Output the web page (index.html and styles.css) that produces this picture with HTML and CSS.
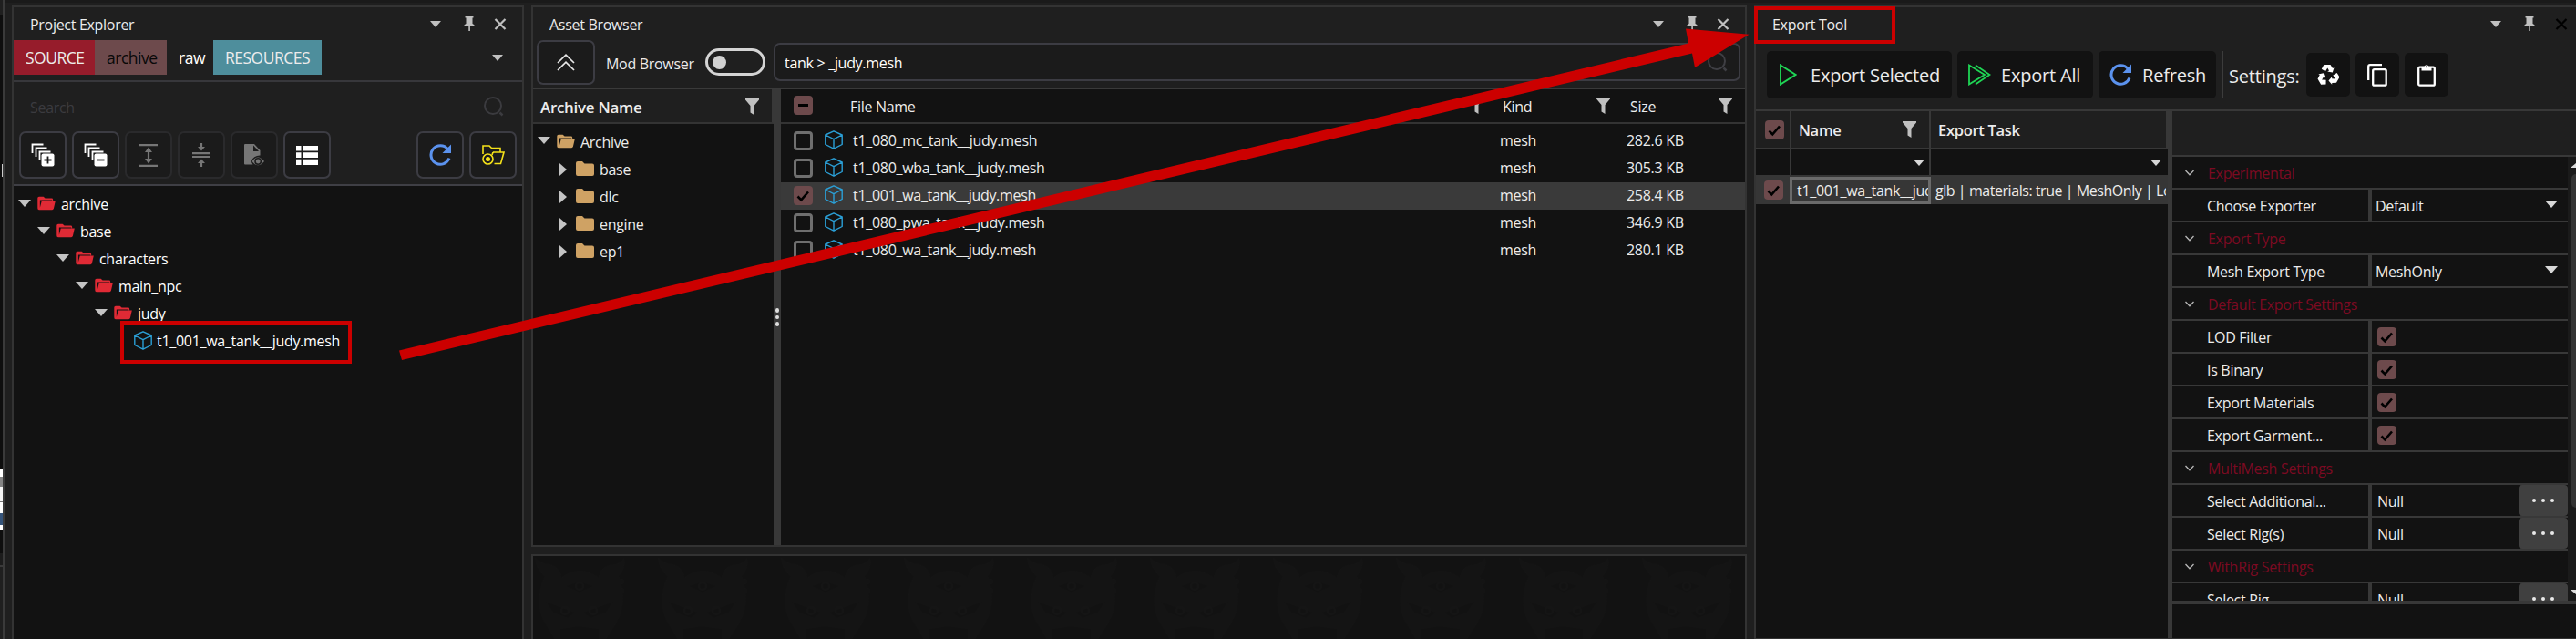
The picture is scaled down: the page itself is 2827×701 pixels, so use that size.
FILE: index.html
```
<!DOCTYPE html>
<html lang="en">
<head>
<meta charset="utf-8">
<title>Export Tool</title>
<link rel="stylesheet" href="styles.css">
</head>
<body>
<svg class="defs" width="0" height="0" aria-hidden="true">
  <symbol id="caret" viewBox="0 0 14 8"><path d="M0 0H14L7 8Z" fill="currentColor"/></symbol>
  <symbol id="caret-right" viewBox="0 0 8 14"><path d="M0 0V14L8 7Z" fill="currentColor"/></symbol>
  <symbol id="pin" viewBox="0 0 12 16"><path d="M1.5 0H10.500V1.500H9.500V8L11.500 9.200V10.800H6.900V16H5.300V10.800H.5V9.200L2.500 8V1.500H1.500Z" fill="currentColor"/></symbol>
  <symbol id="close" viewBox="0 0 14 13"><path d="M1.500 1L12.500 12M12.500 1L1.500 12" stroke="currentColor" stroke-width="2.200" fill="none"/></symbol>
  <symbol id="search" viewBox="0 0 22 22"><circle cx="10" cy="10" r="9" fill="none" stroke="currentColor" stroke-width="2"/><path d="M17.500 17.500L20.500 20.500" stroke="currentColor" stroke-width="2.500"/></symbol>
  <symbol id="funnel" viewBox="0 0 15 18"><path d="M0 0H15V1.500L9.500 8V18L5.500 15.500V8L0 1.500Z" fill="currentColor"/></symbol>
  <symbol id="folder-open" viewBox="0 0 21 16"><path d="M2 15.500Q.3 15.500.3 13.500V2Q.3.300 2 .300H7L9 2.300H16.500Q18 2.300 18 3.800V5H17V4.200H3V13L5 5.500H20.800L18.800 14Q18.400 15.500 17 15.500Z" fill="currentColor"/></symbol>
  <symbol id="folder" viewBox="0 0 20 16"><path d="M0 2Q0 0 2 0H7L9.500 2.500H18Q20 2.500 20 4.500V14Q20 16 18 16H2Q0 16 0 14Z" fill="currentColor"/></symbol>
  <symbol id="cube" viewBox="0 0 20 21"><path d="M10 .8L19.200 5V15.500L10 20.200L.8 15.500V5ZM.8 5L10 9.700L19.200 5M10 9.700V20.200" fill="none" stroke="currentColor" stroke-width="1.400" stroke-linejoin="round"/></symbol>
  <symbol id="check" viewBox="0 0 21 21"><path d="M4.500 11.500L8.300 15.300L16 6.500" fill="none" stroke="#000" stroke-width="2.600"/></symbol>
  <symbol id="chev" viewBox="0 0 10 7"><path d="M.5 1L5 5.800L9.500 1" fill="none" stroke="currentColor" stroke-width="1.300"/></symbol>
  <symbol id="refresh" viewBox="0 0 24 24"><path d="M20.300 5.500A10.300 10.300 0 1 0 22 15.500" fill="none" stroke="currentColor" stroke-width="3"/><path d="M24 .5V10H14.500Z" fill="currentColor"/></symbol>
</svg>

<div class="app">
  <aside class="strip"><i class="strip-top"></i><i class="strip-text"></i><i class="strip-white"></i><i class="strip-end"></i></aside>

  <section class="panel explorer">
    <header class="title"><span>Project Explorer</span>
      <div class="winbtns"><svg class="w-caret"><use href="#caret"/></svg><svg class="w-pin"><use href="#pin"/></svg><svg class="w-close"><use href="#close"/></svg></div>
    </header>
    <nav class="tabs">
      <span class="tab source">SOURCE</span><span class="tab arch">archive</span><span class="tab raw">raw</span><span class="tab res">RESOURCES</span>
      <svg class="tabs-caret"><use href="#caret"/></svg>
    </nav>
    <div class="search"><span>Search</span><svg><use href="#search"/></svg></div>
    <div class="tools">
      <button class="tool"><svg width="26" height="26" viewBox="0 0 26 26"><g fill="none" stroke="#fff" stroke-width="1.800"><path d="M1.500 11V1.500H13.500M5.500 15V5.500H17.500M9.500 19V9.500H21.500" /></g><rect x="11.500" y="11.500" width="14" height="14" rx="2" fill="#fff"/><path d="M18.500 14.500V22.500M14.500 18.500H22.500" stroke="#1b1b1b" stroke-width="1.800"/></svg></button>
      <button class="tool"><svg width="26" height="26" viewBox="0 0 26 26"><g fill="none" stroke="#fff" stroke-width="1.800"><path d="M1.500 11V1.500H13.500M5.500 15V5.500H17.500M9.500 19V9.500H21.500" /></g><rect x="11.500" y="11.500" width="14" height="14" rx="2" fill="#fff"/><path d="M14.500 18.500H22.500" stroke="#1b1b1b" stroke-width="1.800"/></svg></button>
      <button class="tool off"><svg width="20" height="25" viewBox="0 0 20 25"><path d="M0 1.200H20M0 23.800H20M10 6V19" stroke="#767676" stroke-width="2.200"/><path d="M10 3.500L14 9H6ZM10 21.500L14 16H6Z" fill="#767676"/></svg></button>
      <button class="tool off"><svg width="20" height="26" viewBox="0 0 20 26"><path d="M0 11.200H20M0 15H20M10 0V5M10 26V21" stroke="#767676" stroke-width="2.200"/><path d="M10 8.500L14 4H6ZM10 17.500L14 22H6Z" fill="#767676"/></svg></button>
      <button class="tool off"><svg width="24" height="26" viewBox="0 0 24 26"><path d="M2 1H12L18.500 8V13.500A10 9 0 0 0 8.500 20L10.500 23.500H2Q1 23.500 1 22.500V2Q1 1 2 1ZM11 2.500V9H17Z" fill="#767676" fill-rule="evenodd"/><path d="M9.500 20Q16 11 23 20Q16 28.500 9.500 20Z" fill="#767676"/><circle cx="16.200" cy="20" r="3.200" fill="#767676" stroke="#1c1c1c" stroke-width="1.500"/></svg></button>
      <button class="tool"><svg width="24" height="21" viewBox="0 0 24 21"><path d="M0 0H5.500V5.500H0ZM7 0H24V5.500H7ZM0 7.300H5.500V13H0ZM7 7.300H24V13H7ZM0 14.800H5.500V21H0ZM7 14.800H24V21H7Z" fill="#fff"/></svg></button>
      <span class="grow"></span>
      <button class="tool blue"><svg width="24" height="24"><use href="#refresh"/></svg></button>
      <button class="tool"><svg width="25" height="23" viewBox="0 0 25 23"><g fill="none" stroke="#f5e21a" stroke-width="1.600"><path d="M1 10V1H8L10.500 3.500H20V8M12 8H24L20.500 20.500H13.500M12 8L11 11"/><circle cx="6.500" cy="15.500" r="5.500"/></g><circle cx="6.500" cy="15.500" r="2.500" fill="#f5e21a"/></svg></button>
    </div>
    <div class="tree">
      <div class="node d0"><svg class="dn"><use href="#caret"/></svg><svg class="fo"><use href="#folder-open"/></svg><span>archive</span></div>
      <div class="node d1"><svg class="dn"><use href="#caret"/></svg><svg class="fo"><use href="#folder-open"/></svg><span>base</span></div>
      <div class="node d2"><svg class="dn"><use href="#caret"/></svg><svg class="fo"><use href="#folder-open"/></svg><span>characters</span></div>
      <div class="node d3"><svg class="dn"><use href="#caret"/></svg><svg class="fo"><use href="#folder-open"/></svg><span>main_npc</span></div>
      <div class="node d4"><svg class="dn"><use href="#caret"/></svg><svg class="fo"><use href="#folder-open"/></svg><span>judy</span></div>
      <div class="node leaf"><svg class="cube"><use href="#cube"/></svg><span>t1_001_wa_tank__judy.mesh</span></div>
    </div>
  </section>

  <div class="middle">
    <section class="panel browser">
      <header class="title"><span>Asset Browser</span>
        <div class="winbtns"><svg class="w-caret"><use href="#caret"/></svg><svg class="w-pin"><use href="#pin"/></svg><svg class="w-close"><use href="#close"/></svg></div>
      </header>
      <div class="bar">
        <button class="up"><svg width="20" height="19" viewBox="0 0 20 19"><path d="M1 10L10 1.200L19 10M1 18L10 9.200L19 18" fill="none" stroke="#e8e8e8" stroke-width="1.700"/></svg></button>
        <span class="mod">Mod Browser</span>
        <span class="toggle"><i></i></span>
        <div class="query"><span>tank &gt; _judy.mesh</span><svg><use href="#search"/></svg></div>
      </div>
      <div class="split">
        <div class="left">
          <div class="lhead"><span>Archive Name</span><svg class="fn"><use href="#funnel"/></svg></div>
          <div class="atree">
            <div class="anode top"><svg class="dn"><use href="#caret"/></svg><svg class="fo"><use href="#folder-open"/></svg><span>Archive</span></div>
            <div class="anode"><svg class="rt"><use href="#caret-right"/></svg><svg class="fo"><use href="#folder"/></svg><span>base</span></div>
            <div class="anode"><svg class="rt"><use href="#caret-right"/></svg><svg class="fo"><use href="#folder"/></svg><span>dlc</span></div>
            <div class="anode"><svg class="rt"><use href="#caret-right"/></svg><svg class="fo"><use href="#folder"/></svg><span>engine</span></div>
            <div class="anode"><svg class="rt"><use href="#caret-right"/></svg><svg class="fo"><use href="#folder"/></svg><span>ep1</span></div>
          </div>
        </div>
        <div class="gutter"><i></i><i></i><i></i></div>
        <div class="files">
          <div class="frow fhead"><span class="cb on dash"></span><span class="c-name">File Name</span><svg class="fn"><use href="#funnel"/></svg><span class="c-kind">Kind</span><svg class="fn"><use href="#funnel"/></svg><span class="c-size">Size</span><svg class="fn last"><use href="#funnel"/></svg></div>
          <div class="frow"><span class="cb"></span><svg class="cube"><use href="#cube"/></svg><span class="f-name">t1_080_mc_tank__judy.mesh</span><span class="f-kind">mesh</span><span class="f-size">282.6 KB</span></div>
          <div class="frow"><span class="cb"></span><svg class="cube"><use href="#cube"/></svg><span class="f-name">t1_080_wba_tank__judy.mesh</span><span class="f-kind">mesh</span><span class="f-size">305.3 KB</span></div>
          <div class="frow sel"><span class="cb on"><svg><use href="#check"/></svg></span><svg class="cube"><use href="#cube"/></svg><span class="f-name">t1_001_wa_tank__judy.mesh</span><span class="f-kind">mesh</span><span class="f-size">258.4 KB</span></div>
          <div class="frow"><span class="cb"></span><svg class="cube"><use href="#cube"/></svg><span class="f-name">t1_080_pwa_tank__judy.mesh</span><span class="f-kind">mesh</span><span class="f-size">346.9 KB</span></div>
          <div class="frow"><span class="cb"></span><svg class="cube"><use href="#cube"/></svg><span class="f-name">t1_080_wa_tank__judy.mesh</span><span class="f-kind">mesh</span><span class="f-size">280.1 KB</span></div>
        </div>
      </div>
    </section>
    <section class="panel lower">
      <svg width="1330" height="91">
        <defs><pattern id="mask" width="135" height="130" patternUnits="userSpaceOnUse">
          <g fill="#141414"><path d="M2 2Q10 9 18 9Q30 12 31 24Q51 8 72 24Q74 12 84 10Q97 9 100 2Q102 14 94 22Q104 50 92 72L80 91H24L10 68Q2 45 13 22Q4 16 2 2Z"/><circle cx="97" cy="28" r="3"/><circle cx="97" cy="38" r="3"/></g>
          <g fill="#121212"><path d="M36 33L51 28L66 33L51 40ZM14 50L46 62L38 68L22 62ZM88 50L55 62L63 68L80 62Z"/><path d="M30 80L50 77L72 80V91H30Z"/></g>
          <g fill="none" stroke="#151515" stroke-width="2"><circle cx="51" cy="33" r="4"/><circle cx="35" cy="60" r="4"/><circle cx="66" cy="60" r="4"/></g>
        </pattern></defs>
        <rect width="1330" height="91" fill="url(#mask)"/>
      </svg>
    </section>
  </div>

  <section class="panel export">
    <header class="title"><span>Export Tool</span>
      <div class="winbtns"><svg class="w-caret"><use href="#caret"/></svg><svg class="w-pin"><use href="#pin"/></svg><svg class="w-close black"><use href="#close"/></svg></div>
    </header>
    <div class="actions">
      <button class="act a1"><svg width="19" height="24" viewBox="0 0 19 24"><path d="M1 1.500L17.500 12L1 22.500Z" fill="none" stroke="#1fd655" stroke-width="1.900"/></svg><span>Export Selected</span></button>
      <button class="act a2"><svg width="25" height="24" viewBox="0 0 25 24"><path d="M1 1.500L18 12L1 22.500ZM8 1.500L23.500 12L8 22.500" fill="none" stroke="#1fd655" stroke-width="1.800"/></svg><span>Export All</span></button>
      <button class="act a3"><svg width="24" height="24"><use href="#refresh"/></svg><span>Refresh</span></button>
      <i class="sep"></i><span class="set">Settings:</span>
      <button class="sq"><svg width="24" height="24" viewBox="0 0 24 24"><g fill="#fff"><path id="ra" d="M7.300 1H14.500L17 5L18.500 4.200L16.800 9.500L11.200 8.500L13 7.400L11.300 4.400L9 8.300L4.800 5.800Z"/><use href="#ra" transform="rotate(120 12 12.800)"/><use href="#ra" transform="rotate(240 12 12.800)"/></g></svg></button>
      <button class="sq"><svg width="22" height="25" viewBox="0 0 22 25"><path d="M1.200 18V3Q1.200 1.200 3 1.200H16" fill="none" stroke="#fff" stroke-width="2.300"/><rect x="6.200" y="6.200" width="14.500" height="17.500" rx="1.500" fill="none" stroke="#fff" stroke-width="2.300"/></svg></button>
      <button class="sq"><svg width="20" height="25" viewBox="0 0 20 25"><rect x="1.200" y="3.700" width="17.600" height="20" rx="1.500" fill="none" stroke="#fff" stroke-width="2.300"/><path d="M4.500 3H7.500A2.700 2.700 0 0 1 12.500 3H15.500V7.500H4.500Z" fill="#fff"/><circle cx="10" cy="3.300" r="1" fill="#111"/></svg></button>
    </div>
    <div class="xbody">
      <div class="grid">
        <div class="ghead"><div class="g0"><span class="cb on"><svg><use href="#check"/></svg></span></div><div class="g1"><span>Name</span><svg class="fn"><use href="#funnel"/></svg></div><div class="g2"><span>Export Task</span></div></div>
        <div class="gfilter"><div class="g0"></div><div class="g1"><svg class="dn"><use href="#caret"/></svg></div><div class="g2"><svg class="dn"><use href="#caret"/></svg></div></div>
        <div class="grow1"><div class="g0"><span class="cb on"><svg><use href="#check"/></svg></span></div><div class="g1"><span>t1_001_wa_tank__judy.mesh</span></div><div class="g2"><span>glb | materials: true | MeshOnly | LodFilter</span></div></div>
      </div>
      <div class="xgutter"></div>
      <div class="props">
        <div class="phead"></div>
        <div class="pscroll">
          <div class="plist">
            <div class="cat"><svg class="chev"><use href="#chev"/></svg>Experimental</div>
            <div class="prop"><span class="k">Choose Exporter</span><span class="v">Default<svg class="dn"><use href="#caret"/></svg></span></div>
            <div class="cat"><svg class="chev"><use href="#chev"/></svg>Export Type</div>
            <div class="prop"><span class="k">Mesh Export Type</span><span class="v">MeshOnly<svg class="dn"><use href="#caret"/></svg></span></div>
            <div class="cat"><svg class="chev"><use href="#chev"/></svg>Default Export Settings</div>
            <div class="prop"><span class="k">LOD Filter</span><span class="v"><span class="cb on"><svg><use href="#check"/></svg></span></span></div>
            <div class="prop"><span class="k">Is Binary</span><span class="v"><span class="cb on"><svg><use href="#check"/></svg></span></span></div>
            <div class="prop"><span class="k">Export Materials</span><span class="v"><span class="cb on"><svg><use href="#check"/></svg></span></span></div>
            <div class="prop"><span class="k">Export Garment...</span><span class="v"><span class="cb on"><svg><use href="#check"/></svg></span></span></div>
            <div class="cat"><svg class="chev"><use href="#chev"/></svg>MultiMesh Settings</div>
            <div class="prop"><span class="k">Select Additional...</span><span class="v nul">Null<b class="more"><i></i><i></i><i></i></b></span></div>
            <div class="prop"><span class="k">Select Rig(s)</span><span class="v nul">Null<b class="more"><i></i><i></i><i></i></b></span></div>
            <div class="cat"><svg class="chev"><use href="#chev"/></svg>WithRig Settings</div>
            <div class="prop"><span class="k">Select Rig</span><span class="v nul">Null<b class="more"><i></i><i></i><i></i></b></span></div>
          </div>
          <div class="scroll"><svg width="9" height="5" viewBox="0 0 9 5"><path d="M3 5L9 0V5Z" fill="#ddd"/></svg><i class="thumb"></i><svg class="sdown" width="9" height="5" viewBox="0 0 9 5"><path d="M3 0H9V5Z" fill="#ddd"/></svg></div>
        </div>
        <div class="pfoot"></div>
      </div>
    </div>
  </section>

  <div class="mark mark-file"></div>
  <div class="mark mark-tool"></div>
  <svg class="arrow" width="2827" height="701"><polygon points="438,384.5 1853,47.5 1850,31.5 1919.500,37.700 1860,74 1857,58.500 441,395" fill="#cc0000"/></svg>
</div>
</body>
</html>
```
FILE: styles.css
```
* { box-sizing: border-box; }
body {
  margin: 0;
  background: #1f1f1f;
  color: #ececec;
  font: 16px/22px "Open Sans", "Noto Sans", sans-serif;
  letter-spacing: -0.3px;
  white-space: nowrap;
}
svg { display: block; flex: none; }
button { margin: 0; padding: 0; font: inherit; letter-spacing: inherit; color: inherit; border: 0; background: none; }
.defs { position: absolute; }
.app {
  position: relative;
  display: flex;
  width: 2827px;
  height: 701px;
  overflow: hidden;
  padding-top: 6px;
  background: linear-gradient(#1a1a1a 3px, #1f1f1f 3px);
}

/* sliver of the neighbouring dock */
.strip { display: flex; flex-direction: column; width: 5px; margin: -6px 8px 0 0; background: #0e0e0e; border-right: 2px solid #3a3a3a; flex: none; }
.strip-top { height: 17px; margin-bottom: 163px; background: #1f1f1f; border-bottom: 1px solid #3a3a3a; }
.strip-text { width: 1px; height: 14px; margin: 0 0 321px 2px; background: #ccc; }
.strip-white { height: 66px; background: linear-gradient(#fff 8px, #858585 8px 19px, #f5f5f5 19px 35px, #777 35px 36px, #fff 36px 48px, #35547a 48px 61px, #fff 61px); }
.strip-end { flex: 1; margin-top: 26px; background: linear-gradient(#1c1c1c 13px, #3a3a3a 13px 15px, #1f1f1f 15px); }

.panel { display: flex; flex-direction: column; border: 2px solid #333; background: #1f1f1f; flex: none; }
.title { display: flex; justify-content: space-between; height: 36px; padding: 8px 17px 0 18px; flex: none; }
.winbtns { display: flex; align-items: flex-start; color: #c0c0c0; }
.w-caret { width: 12px; height: 7px; margin: 7px 25px 0 0; }
.w-pin { width: 12px; height: 16px; margin: 2px 21px 0 0; }
.w-close { width: 14px; height: 13px; margin-top: 4px; }
.w-close.black { color: #000; }

/* project explorer */
.explorer { width: 562px; height: 700px; border-bottom: 0; }
.tabs { display: flex; height: 46px; padding-bottom: 6px; border-bottom: 2px solid #37373b; flex: none; }
.tab { font-size: 17.500px; letter-spacing: -0.500px; line-height: 39px; padding-left: 13px; }
.source { width: 89px; background: #961c2b; }
.arch { width: 79px; background: #6d4a4c; color: #080808; }
.raw { width: 51px; color: #fff; }
.res { width: 119px; background: #4e8e9c; }
.tabs-caret { width: 12px; height: 7px; margin: 16px 21px 0 auto; color: #c0c0c0; }
.search { display: flex; justify-content: space-between; height: 54px; padding: 17px 20px 0 18px; color: #3b3b3f; flex: none; }
.search svg { width: 22px; height: 22px; margin-top: -1px; }
.tools { display: flex; gap: 6px; height: 60px; padding: 0 6px; border-bottom: 2px solid #3f3f45; flex: none; }
.tool { display: flex; align-items: center; justify-content: center; width: 52px; height: 52px; background: #1b1b1b; border: 2px solid #3c3c43; border-radius: 7px; }
.tool.off { border-color: #2a2a2c; }
.blue { color: #5b92ee; }
.grow { flex: 1; }
.tree { flex: 1; padding-top: 5px; background: #121212; color: #fff; }
.node { display: flex; align-items: center; height: 30px; }
.dn { width: 14px; height: 8px; color: #c4c4c4; }
.node .dn { margin-right: 7px; margin-top: -3px; }
.node .fo { width: 20px; height: 16px; margin-right: 6px; margin-top: -2px; color: #e02a35; }
.d0 { padding-left: 5px; } .d1 { padding-left: 26px; } .d2 { padding-left: 47px; } .d3 { padding-left: 68px; } .d4 { padding-left: 89px; }
.leaf { padding-left: 132px; }
.cube { width: 20px; height: 21px; color: #2b9fd6; }
.leaf .cube { margin-right: 5px; margin-top: -2px; }

/* asset browser */
.middle { display: flex; flex-direction: column; gap: 8px; margin-left: 8px; width: 1334px; flex: none; }
.browser { height: 594px; }
.bar { display: flex; height: 54px; border-bottom: 1px solid #3a3a3a; padding: 0 5px 0 4px; flex: none; }
.up { display: flex; align-items: center; justify-content: center; width: 64px; height: 49px; background: #1b1b1b; border: 2px solid #3c3c43; border-radius: 7px; }
.mod { width: 121px; padding: 15px 0 0 12px; }
.toggle { width: 66px; height: 30px; margin: 9px 9px 0 0; padding: 5px; border: 3px solid #d4d4d4; border-radius: 15px; }
.toggle i { display: block; width: 15px; height: 15px; border-radius: 50%; background: #d0d0d0; }
.query { display: flex; justify-content: space-between; flex: 1; height: 42px; margin-top: 3px; padding: 9px 12px 0 10px; background: #1b1b1b; border: 2px solid #3c3c43; border-radius: 7px; color: #fff; }
.query svg { width: 22px; height: 22px; margin-top: -1px; color: #3f3f44; }
.split { display: flex; flex: 1; min-height: 0; }
.left { display: flex; flex-direction: column; width: 264px; background: #121212; }
.lhead { display: flex; justify-content: space-between; width: 264px; height: 38px; padding: 9px 14px 0 8px; background: #1f1f1f; border-bottom: 2px solid #333; border-right: 2px solid #383838; font-weight: 600; font-size: 17px; }
.fn { width: 15px; height: 18px; color: #c0c0c0; }
.lhead .fn { margin-top: 1px; }
.atree { padding-top: 5px; }
.anode { display: flex; align-items: center; height: 30px; padding-left: 29px; }
.anode.top { padding-left: 5px; }
.anode .dn { margin: -4px 7px 0 0; }
.anode .rt { width: 8px; height: 14px; margin: -1px 10px 0 0; color: #c4c4c4; }
.anode .fo { width: 20px; height: 16px; margin: -2px 6px 0 0; color: #cfa264; }
.gutter { display: flex; flex-direction: column; align-items: center; justify-content: center; gap: 3px; width: 8px; background: #383838; }
.gutter i { width: 4px; height: 4.500px; border-radius: 50%; background: #ddd; }
.files { flex: 1; background: #121212; }
.frow { display: flex; align-items: center; height: 30px; padding-left: 14px; }
.frow.sel { background: #3a3a3a; }
.fhead { height: 38px; padding-bottom: 1px; margin-bottom: 4px; border-bottom: 2px solid #333; }
.c-name { width: 721px; padding-left: 41px; }
.c-kind { width: 124px; padding-left: 21px; }
.c-size { width: 119px; padding-left: 22px; }
.fhead .c-name, .fhead .c-kind, .fhead .c-size { padding-top: 2px; }
.cb { display: block; flex: none; width: 21px; height: 21px; border: 3px solid #6f6f6f; border-radius: 4px; }
.cb.on { border: 0; background: #6d4a4c; }
.cb svg { width: 21px; height: 21px; }
.frow .cb { margin-top: -1px; }
.dash { display: flex; align-items: center; justify-content: center; }
.dash::after { content: ""; width: 11px; height: 3px; background: #000; }
.frow .cube { margin: -4px 11px 0 13px; }
.f-name { width: 710px; margin-top: -2px; }
.f-kind { width: 139px; margin-top: -2px; }
.f-size { margin-top: -2px; }
.lower { height: 93px; border-bottom: 0; background: #121212; }

/* export tool */
.export { width: 902px; height: 695px; margin-left: 8px; border-right: 0; border-bottom-width: 1px; }
.export .title { height: 48px; padding-right: 9px; }
.export .w-pin { margin-right: 22px; }
.actions { display: flex; gap: 6px; height: 66px; padding-left: 12px; border-bottom: 2px solid #383838; font-size: 20px; letter-spacing: -0.200px; flex: none; }
.act { display: flex; align-items: center; height: 52px; background: #121212; border-radius: 5px; }
.act span { padding-top: 2px; }
.a1 { width: 203px; padding-left: 14px; } .a1 span { padding-left: 15px; }
.a2 { width: 149px; padding-left: 12px; } .a2 span { padding-left: 11px; }
.a3 { width: 129px; padding-left: 12px; } .a3 span { padding-left: 12px; }
.a3 svg { color: #5b92ee; }
.sep { width: 2px; height: 52px; background: #3c3c3c; }
.set { width: 79px; padding-top: 17px; }
.sq { display: flex; align-items: center; justify-content: center; width: 48px; height: 48px; margin-top: 2px; background: #121212; border-radius: 5px; }
.xbody { display: flex; flex: 1; min-height: 0; }
.grid { width: 452px; background: #121212; }
.grid > div { display: flex; }
.g0 { width: 39px; padding-left: 10px; border-right: 2px solid #383838; flex: none; }
.g1 { display: flex; justify-content: space-between; width: 153px; padding-left: 10px; border-right: 2px solid #383838; overflow: hidden; flex: none; }
.g2 { display: flex; width: 258px; padding-left: 8px; overflow: hidden; flex: none; }
.ghead { height: 42px; border-bottom: 2px solid #383838; background: #1f1f1f; border-right: 2px solid #383838; font-weight: 600; font-size: 16.500px; line-height: 41px; }
.ghead .g1 { padding-left: 8px; }
.ghead .cb { margin-top: 10px; }
.ghead .fn { margin: 11px 14px 0 0; }
.gfilter { height: 28px; }
.gfilter .g1, .gfilter .g2 { justify-content: flex-end; padding-right: 4px; }
.gfilter .dn { margin-top: 11px; height: 7px; color: #d8d8d8; }
.grow1 { height: 32px; background: #363636; line-height: 34px; }
.grow1 .g0 { border: 0; width: 37px; padding: 6px 0 0 9px; }
.grow1 .g1 { width: 155px; height: 30px; margin-top: 2px; padding-left: 5px; border: 3px solid #6a6a6a; line-height: 24px; }
.grow1 .g2 { padding-left: 5px; letter-spacing: -0.450px; }
.xgutter { width: 5px; background: #383838; }
.props { display: flex; flex-direction: column; flex: 1; min-width: 0; background: #121212; }
.phead { height: 50px; background: #1f1f1f; border-bottom: 2px solid #383838; flex: none; }
.pscroll { display: flex; height: 487px; overflow: hidden; flex: none; }
.plist { width: 434px; flex: none; }
.cat, .prop { display: flex; height: 36px; border-bottom: 2px solid #383838; line-height: 36px; }
.cat { color: #7c0a22; }
.chev { width: 10px; height: 7px; margin: 14px 15px 0 14px; color: #b8b8b8; }
.k { width: 217px; padding-left: 38px; border-right: 2px solid #383838; }
.v { display: flex; justify-content: space-between; flex: 1; padding: 0 11px 0 4px; border-left: 2px solid #383838; }
.v .dn { margin-top: 12px; color: #d8d8d8; }
.v .cb { margin: 7px 0 0 2px; }
.v.nul { padding: 0 0 0 6px; }
.more { display: flex; align-items: center; justify-content: center; gap: 6px; width: 54px; height: 34px; background: #404040; border-radius: 4px; }
.more i { width: 4px; height: 4px; border-radius: 50%; background: #e8e8e8; }
.scroll { display: flex; flex-direction: column; flex: 1; padding-top: 7px; background: #1a1a1a; }
.thumb { height: 366px; margin: 7px 0 90px 4px; background: #333; border-radius: 6px 0 0 6px; }
.pfoot { flex: 1; border-top: 4px solid #383838; background: #121212; }

/* annotations */
.mark { position: absolute; border: 4px solid #cc0000; }
.mark-file { left: 132px; top: 352px; width: 254px; height: 47px; }
.mark-tool { left: 1925px; top: 7px; width: 155px; height: 41px; }
.arrow { position: absolute; left: 0; top: 0; }
```
